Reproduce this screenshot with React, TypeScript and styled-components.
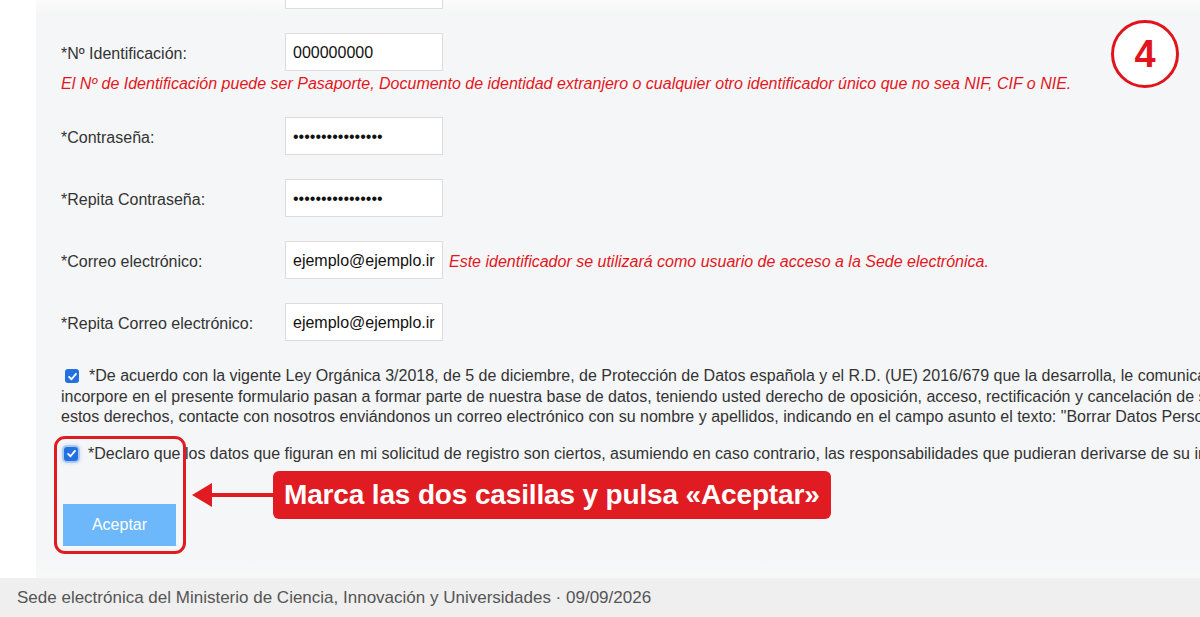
import React from 'react';
import styled, { createGlobalStyle } from 'styled-components';

// GLOBAL //
const GlobalStyle = createGlobalStyle`
    html, body {
        margin: 0;
        padding: 0;
        background: #ffffff;
        overflow: hidden;
    }
    body {
        font-family: 'Liberation Sans', Arial, Helvetica, sans-serif;
        -webkit-font-smoothing: antialiased;
    }
`;

interface Field {
    label: string;
    value: string;
    hint?: string;
    inlineHint?: string;
}

const DOTS = '••••••••••••••••';

const fields: Field[] = [
    { label: '', value: '' },
    {
        label: '*Nº Identificación:',
        value: '000000000',
        hint: 'El Nº de Identificación puede ser Pasaporte, Documento de identidad extranjero o cualquier otro identificador único que no sea NIF, CIF o NIE.',
    },
    { label: '*Contraseña:', value: DOTS },
    { label: '*Repita Contraseña:', value: DOTS },
    {
        label: '*Correo electrónico:',
        value: 'ejemplo@ejemplo.ir',
        inlineHint: 'Este identificador se utilizará como usuario de acceso a la Sede electrónica.',
    },
    { label: '*Repita Correo electrónico:', value: 'ejemplo@ejemplo.ir' },
];

const privacyLines = [
    '*De acuerdo con la vigente Ley Orgánica 3/2018, de 5 de diciembre, de Protección de Datos española y el R.D. (UE) 2016/679 que la desarrolla, le comunicamos que los datos que usted',
    'incorpore en el presente formulario pasan a formar parte de nuestra base de datos, teniendo usted derecho de oposición, acceso, rectificación y cancelación de sus datos. Para ejercer',
    'estos derechos, contacte con nosotros enviándonos un correo electrónico con su nombre y apellidos, indicando en el campo asunto el texto: "Borrar Datos Personales".',
];

const Check: React.FC<{ focused?: boolean }> = ({ focused }) => (
    <CheckBox $focused={focused}>
        <svg width="11" height="11" viewBox="0 0 12 12">
            <path
                d="M2.3 6.4 L4.9 9 L9.8 3.2"
                fill="none"
                stroke="#ffffff"
                strokeWidth="2"
                strokeLinecap="round"
                strokeLinejoin="round"
            />
        </svg>
    </CheckBox>
);

const App: React.FC = () => {
    return (
        <Page>
            <GlobalStyle />
            <Panel>
                <Form>
                    {fields.map((f, i) => (
                        <Group key={i}>
                            <Row>
                                <Label>{f.label}</Label>
                                <Input readOnly value={f.value} />
                                {f.inlineHint ? <InlineHint>{f.inlineHint}</InlineHint> : null}
                            </Row>
                            {f.hint ? <Hint>{f.hint}</Hint> : null}
                        </Group>
                    ))}

                    <Legal>
                        {privacyLines.map((line, i) => (
                            <Line key={i}>
                                {i === 0 ? <Check /> : null}
                                {line}
                            </Line>
                        ))}
                    </Legal>

                    <Declare>
                        <Line>
                            <Check focused />
                            *Declaro que los datos que figuran en mi solicitud de registro son ciertos, asumiendo en caso contrario, las responsabilidades que pudieran derivarse de su inexactitud.
                        </Line>
                    </Declare>

                    <SubmitButton type="button">Aceptar</SubmitButton>
                </Form>

                <StepBadge>4</StepBadge>
                <Highlight />
                <Callout>
                    <ArrowHead />
                    <ArrowShaft />
                    <CalloutLabel>Marca las dos casillas y pulsa «Aceptar»</CalloutLabel>
                </Callout>
            </Panel>
            <Footer>Sede electrónica del Ministerio de Ciencia, Innovación y Universidades · 09/09/2026</Footer>
        </Page>
    );
};

// STYLES //
const Page = styled.div`
    width: 1200px;
    height: 617px;
    display: flex;
    flex-direction: column;
    overflow: hidden;
`;

const Panel = styled.div`
    position: relative;
    margin-left: 36px;
    height: 578px;
    flex-shrink: 0;
    background: linear-gradient(
        to bottom,
        #fbfbfb 0px,
        #f5f6f7 14px,
        #f5f6f7 560px,
        #f8f8f8 578px
    );
    overflow: hidden;
`;

const Form = styled.div`
    display: flex;
    flex-direction: column;
    padding-left: 25px;
    margin-top: -29px;
    color: #333333;
    font-size: 16px;
`;

const Group = styled.div`
    display: flex;
    flex-direction: column;
    margin-bottom: 24px;
`;

const Row = styled.div`
    display: flex;
    align-items: center;
    height: 38px;
`;

const Label = styled.div`
    width: 224px;
    flex-shrink: 0;
    padding-top: 3px;
    color: #333333;
`;

const Input = styled.input`
    box-sizing: border-box;
    width: 158px;
    height: 38px;
    padding: 2px 7px 0;
    border: 1px solid #dcdcdc;
    background: #ffffff;
    color: #111111;
    font-family: inherit;
    font-size: 16px;
    outline: none;
`;

const Hint = styled.div`
    margin-top: 4px;
    line-height: 18px;
    color: #e3161d;
    font-style: italic;
    white-space: nowrap;
`;

const InlineHint = styled.span`
    margin-left: 6px;
    padding-top: 3px;
    color: #e3161d;
    font-style: italic;
    white-space: nowrap;
`;

const Legal = styled.div`
    margin-top: 1px;
    line-height: 20.5px;
`;

const Line = styled.div`
    display: flex;
    align-items: center;
    white-space: nowrap;
`;

const Declare = styled.div`
    margin-top: 16px;
    line-height: 20px;
`;

const CheckBox = styled.span<{ $focused?: boolean }>`
    display: inline-flex;
    align-items: center;
    justify-content: center;
    box-sizing: border-box;
    width: 14px;
    height: 14px;
    margin: 0 10px 0 ${p => (p.$focused ? '3px' : '4px')};
    border-radius: 3px;
    background: #2470e0;
    flex-shrink: 0;
    box-shadow: ${p =>
        p.$focused ? '0 0 0 2px rgba(90, 150, 235, 0.35), 0 0 4px 2px rgba(90, 150, 235, 0.3)' : 'none'};
`;

const SubmitButton = styled.button`
    margin-top: 40px;
    margin-left: 2px;
    width: 113px;
    height: 42px;
    border: none;
    background: #6cb8fa;
    color: #ffffff;
    font-family: inherit;
    font-size: 16px;
    cursor: default;
`;

const StepBadge = styled.div`
    position: absolute;
    left: 1075px;
    top: 20px;
    width: 68px;
    height: 68px;
    box-sizing: border-box;
    border: 3.5px solid #e1141c;
    border-radius: 50%;
    background: #ffffff;
    display: flex;
    align-items: center;
    justify-content: center;
    color: #e1141c;
    font-size: 38px;
    font-weight: 700;
`;

const Highlight = styled.div`
    position: absolute;
    left: 18px;
    top: 436px;
    width: 132px;
    height: 118px;
    box-sizing: border-box;
    border: 3px solid #e01b22;
    border-radius: 11px;
`;

const Callout = styled.div`
    position: absolute;
    left: 156px;
    top: 471px;
    display: flex;
    align-items: center;
`;

const ArrowHead = styled.div`
    width: 0;
    height: 0;
    border-top: 12px solid transparent;
    border-bottom: 12px solid transparent;
    border-right: 20px solid #e11b22;
`;

const ArrowShaft = styled.div`
    width: 61px;
    height: 4px;
    background: #e11b22;
`;

const CalloutLabel = styled.div`
    height: 48px;
    padding: 0 11px;
    display: flex;
    align-items: center;
    border-radius: 6px;
    background: #e11b22;
    color: #ffffff;
    font-family: 'Liberation Sans', Arial, Helvetica, sans-serif;
    font-size: 28px;
    font-weight: 700;
    letter-spacing: -0.15px;
    white-space: nowrap;
`;

const Footer = styled.div`
    flex: 1;
    display: flex;
    align-items: center;
    padding-left: 17px;
    background: #efefef;
    color: #555555;
    font-size: 17px;
    white-space: nowrap;
`;

export default App;
